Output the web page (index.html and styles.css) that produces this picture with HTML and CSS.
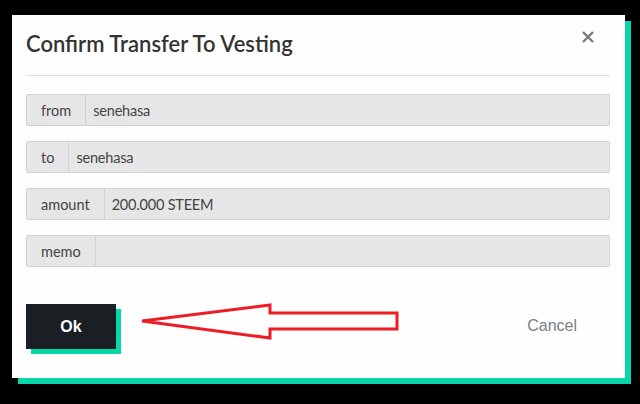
FILE: index.html
```html
<!DOCTYPE html>
<html>
<head>
<meta charset="utf-8">
<link rel="stylesheet" href="styles.css">
</head>
<body>
<div class="modal">
  <div class="header">
    <h1 class="title">Confirm Transfer To Vesting</h1>
    <svg class="close" width="12" height="12" viewBox="0 0 12 12"><path d="M1 1L11 11M11 1L1 11" stroke="#7b7b7b" stroke-width="2.4" fill="none"/></svg>
  </div>
  <div class="divider"></div>
  <div class="fields">
    <div class="row"><span class="label">from</span><span class="value">senehasa</span></div>
    <div class="row"><span class="label">to</span><span class="value">senehasa</span></div>
    <div class="row"><span class="label">amount</span><span class="value">200.000 STEEM</span></div>
    <div class="row"><span class="label">memo</span><span class="value"></span></div>
  </div>
  <div class="footer">
    <button class="ok">Ok</button>
    <span class="cancel">Cancel</span>
  </div>
  <svg class="arrow" width="640" height="404" viewBox="0 0 640 404"><polygon points="142,321 270,305 270,313 397,313 397,329 270,329 270,338" fill="none" stroke="#ee1c25" stroke-width="3" stroke-linejoin="miter"/></svg>
</div>
</body>
</html>
```
FILE: styles.css
```css
html, body {
  margin: 0;
  padding: 0;
  background: #000;
  width: 640px;
  height: 404px;
  overflow: hidden;
}
.modal {
  margin: 15px 0 0 12px;
  width: 613px;
  height: 363px;
  box-sizing: border-box;
  background: #fefefe;
  box-shadow: 6px 6px 0 #06d6a9;
  padding: 0 15px 0 14px;
  display: flex;
  flex-direction: column;
}
.header {
  display: flex;
  justify-content: space-between;
  align-items: flex-start;
  padding-top: 14px;
}
.title {
  margin: 0;
  font-family: Lato, "Open Sans", sans-serif;
  font-weight: 600;
  font-size: 22px;
  line-height: 30px;
  color: #333;
}
.close {
  margin-top: 2px;
  margin-right: 16px;
}
.divider {
  margin-top: 16px;
  height: 1px;
  background: #dedede;
}
.fields {
  margin-top: 18px;
  display: flex;
  flex-direction: column;
  gap: 15px;
}
.row {
  display: flex;
  height: 32px;
  box-sizing: border-box;
  border: 1px solid #d2d2d2;
  border-radius: 2px;
  background: #e6e6e6;
  font-family: Lato, "Open Sans", sans-serif;
  font-size: 14.5px;
  color: #444;
}
.label {
  display: flex;
  align-items: center;
  padding: 0 14px;
  border-right: 1px solid #d2d2d2;
}
.value {
  display: flex;
  align-items: center;
  padding-left: 7px;
  flex: 1;
  letter-spacing: -0.2px;
}
.footer {
  margin-top: 37px;
  display: flex;
  justify-content: space-between;
  align-items: center;
}
.ok {
  width: 90px;
  height: 45px;
  border: none;
  background: #1a1f24;
  color: #fff;
  font-family: "Liberation Sans", Arial, sans-serif;
  font-weight: bold;
  font-size: 16px;
  box-shadow: 5px 5px 0 #06d6a9;
  padding: 0;
}
.cancel {
  font-family: "Liberation Sans", Arial, sans-serif;
  font-size: 16px;
  color: #788187;
  margin-right: 33px;
  margin-top: -2px;
}
.arrow {
  position: absolute;
  left: 0;
  top: 0;
  pointer-events: none;
}
```
